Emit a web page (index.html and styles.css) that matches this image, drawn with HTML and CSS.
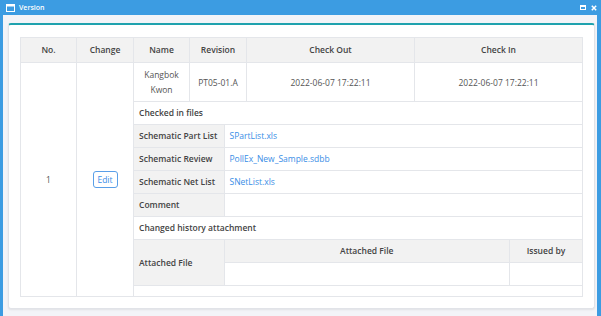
FILE: index.html
```html
<!DOCTYPE html>
<html lang="en">

<head>
    <meta charset="UTF-8">
    <title>Version</title>
    <link rel="stylesheet" href="styles.css">
</head>

<body>
    <div class="window">
        <div class="titlebar">
            <svg class="win-icon" width="9" height="8" viewBox="0 0 9 8">
                <rect x="0.5" y="0.5" width="8" height="7" fill="none" stroke="#fff" stroke-width="1"/>
                <rect x="0.5" y="0.5" width="8" height="2" fill="#fff"/>
            </svg>
            <span class="title">Version</span>
            <div class="controls">
                <svg width="6" height="5" viewBox="0 0 6 5">
                    <rect x="0.5" y="0.5" width="5" height="4" fill="none" stroke="#fff" stroke-width="1"/>
                    <rect x="0.5" y="0.5" width="5" height="1.5" fill="#fff"/>
                </svg>
                <svg width="6" height="6" viewBox="0 0 6 6">
                    <path d="M0.8 0.8 L5.2 5.2 M5.2 0.8 L0.8 5.2" stroke="#fff" stroke-width="1.5" fill="none"/>
                </svg>
            </div>
        </div>

        <div class="window-body">
            <div class="panel">
                <table class="grid">
                    <colgroup>
                        <col style="width: 56px">
                        <col style="width: 57px">
                        <col style="width: 56px">
                        <col style="width: 57px">
                        <col style="width: 168px">
                        <col>
                    </colgroup>
                    <thead>
                        <tr>
                            <th>No.</th>
                            <th>Change</th>
                            <th>Name</th>
                            <th>Revision</th>
                            <th>Check Out</th>
                            <th>Check In</th>
                        </tr>
                    </thead>
                    <tbody>
                        <tr class="main-row">
                            <td rowspan="2">1</td>
                            <td rowspan="2"><button class="btn-edit">Edit</button></td>
                            <td>Kangbok<br>Kwon</td>
                            <td>PT05-01.A</td>
                            <td>2022-06-07 17:22:11</td>
                            <td>2022-06-07 17:22:11</td>
                        </tr>
                        <tr>
                            <td colspan="4" class="nest">
                                <table class="files">
                                    <colgroup>
                                        <col style="width: 90px">
                                        <col>
                                    </colgroup>
                                    <tr>
                                        <th colspan="2" class="caption">Checked in files</th>
                                    </tr>
                                    <tr>
                                        <th>Schematic Part List</th>
                                        <td><a href="#">SPartList.xls</a></td>
                                    </tr>
                                    <tr>
                                        <th>Schematic Review</th>
                                        <td><a href="#">PollEx_New_Sample.sdbb</a></td>
                                    </tr>
                                    <tr>
                                        <th>Schematic Net List</th>
                                        <td><a href="#">SNetList.xls</a></td>
                                    </tr>
                                    <tr>
                                        <th>Comment</th>
                                        <td></td>
                                    </tr>
                                    <tr>
                                        <th colspan="2" class="caption">Changed history attachment</th>
                                    </tr>
                                    <tr>
                                        <th>Attached File</th>
                                        <td class="holder">
                                            <table class="attach">
                                                <tr>
                                                    <th>Attached File</th>
                                                    <th class="issued">Issued by</th>
                                                </tr>
                                                <tr>
                                                    <td></td>
                                                    <td></td>
                                                </tr>
                                            </table>
                                        </td>
                                    </tr>
                                </table>
                            </td>
                        </tr>
                    </tbody>
                </table>
            </div>
        </div>
    </div>
</body>

</html>
```

FILE: styles.css
```css
body {
    margin: 0;
    font-family: 'Open Sans', 'Noto Sans', sans-serif;
    font-size: 8.5px;
    color: #555;
}

.window {
    width: 601px;
    height: 316px;
    display: flex;
    flex-direction: column;
    overflow: hidden;
}

.titlebar {
    height: 15px;
    background-color: #3c9ce2;
    display: flex;
    align-items: center;
    padding: 0 4px 0 6px;
    color: #fff;
}

.win-icon {
    margin-right: 4px;
}

.title {
    font-size: 7px;
    font-weight: 600;
}

.controls {
    margin-left: auto;
    display: flex;
    align-items: center;
    gap: 5px;
}

.window-body {
    flex: 1;
    background-color: #f3f4f8;
    border-left: 3px solid #3c9ce2;
    border-right: 4px solid #3c9ce2;
    padding: 8px 2px 0 5px;
}

.panel {
    background-color: #fff;
    border: 1px solid #e1e3e8;
    border-top: 2px solid #1fa2ae;
    border-radius: 3px;
    box-shadow: 0 1px 2px rgba(0, 0, 0, 0.08);
    padding: 12px 11px 11px 11px;
}

.grid {
    width: 100%;
    border-collapse: collapse;
    table-layout: fixed;
}

.grid th,
.grid td {
    border: 1px solid #e4e6ea;
    padding: 4px 3px;
    line-height: 15px;
    text-align: center;
    font-weight: normal;
    color: #555;
}

.grid thead th {
    background-color: #f2f2f2;
    color: #444;
    font-weight: 600;
    line-height: 16px;
}

.main-row td {
    line-height: 15px;
}

.btn-edit {
    width: 25px;
    height: 17px;
    padding: 0;
    font-family: inherit;
    font-size: 8.5px;
    color: #3a8ee6;
    background-color: #fff;
    border: 1px solid #5a9fe8;
    border-radius: 3px;
}

.grid td.nest {
    padding: 0 0 10px 0;
    vertical-align: top;
}

.files {
    width: 100%;
    border-collapse: collapse;
    table-layout: fixed;
}

.grid .files th,
.grid .files td {
    border: none;
    border-bottom: 1px solid #e4e6ea;
    padding: 4px 5px;
    line-height: 14px;
    text-align: left;
}

.grid .files th {
    background-color: #f2f2f2;
    color: #444;
    font-weight: 600;
}

.grid .files td {
    border-left: 1px solid #e4e6ea;
}

.grid .files th.caption {
    background-color: #fff;
}

.grid .files td.holder {
    padding: 0;
}

.attach {
    width: 100%;
    border-collapse: collapse;
    border-style: hidden;
}

.grid .attach th,
.grid .attach td {
    border: 1px solid #e4e6ea;
    padding: 4px 5px;
    height: 14px;
    text-align: center;
}

.grid .attach th {
    background-color: #f2f2f2;
}

.grid .attach th.issued {
    width: 62px;
}

a {
    color: #3a8ee6;
    text-decoration: none;
}
```
